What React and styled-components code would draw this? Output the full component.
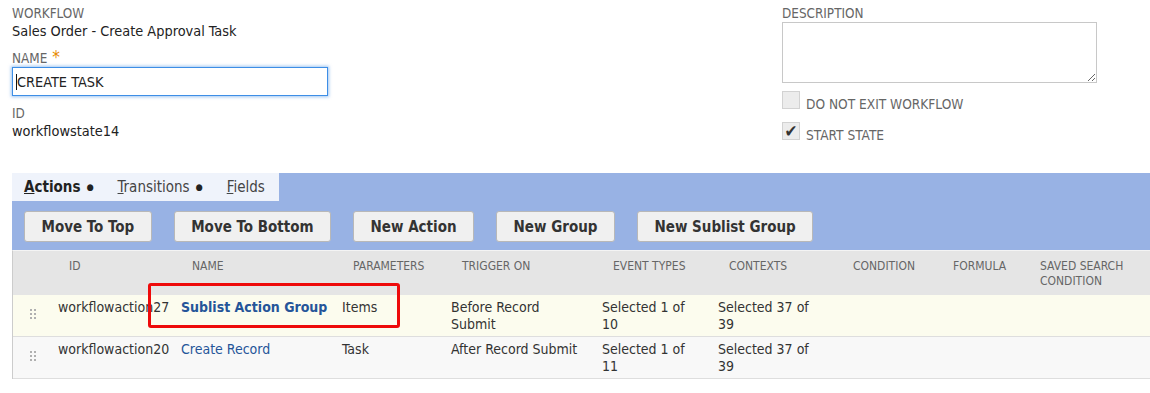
import React from "react";
import styled, { createGlobalStyle } from "styled-components";

const GlobalStyle = createGlobalStyle`
  body {
    margin: 0;
    background: #ffffff;
    font-family: "DejaVu Sans Condensed", "Liberation Sans", sans-serif;
    color: #333333;
  }
`;

const Page = styled.div`
  width: 1150px;
  height: 393px;
  overflow: hidden;
`;

const Form = styled.div`
  display: flex;
  align-items: flex-start;
  padding: 6px 0 0 12px;
`;

const LeftColumn = styled.div`
  width: 770px;
  display: flex;
  flex-direction: column;
`;

const RightColumn = styled.div`
  display: flex;
  flex-direction: column;
`;

const Label = styled.div`
  font-size: 13.4px;
  line-height: 16px;
  color: #666666;
  text-transform: uppercase;
  margin-top: ${(p) => p.$gap || 0}px;
`;

const Required = styled.span`
  color: #e68a00;
  font-size: 17px;
  margin-left: 5px;
  vertical-align: top;
  line-height: 12px;
`;

const Value = styled.div`
  font-size: 14.4px;
  line-height: 18px;
  color: #222222;
`;

const InputWrap = styled.div`
  position: relative;
  width: 316px;
`;

const NameInput = styled.input`
  box-sizing: border-box;
  width: 316px;
  height: 29px;
  padding: 0 4px;
  border: 1px solid #3d8ee6;
  box-shadow: 0 0 3px 1px rgba(80, 150, 230, 0.55);
  font-family: inherit;
  font-size: 14.4px;
  color: #222222;
  outline: none;
`;

const Caret = styled.span`
  position: absolute;
  left: 4px;
  top: 7px;
  width: 1px;
  height: 16px;
  background: #111111;
`;

const Description = styled.textarea`
  box-sizing: border-box;
  width: 315px;
  height: 61px;
  border: 1px solid #c8c8c8;
  resize: both;
  font-family: inherit;
`;

const CheckRow = styled.label`
  display: flex;
  align-items: flex-start;
  gap: 6px;
  height: 18px;
  margin-top: ${(p) => p.$gap}px;
  font-size: 13.6px;
  line-height: 16px;
  color: #666666;
  span {
    margin-top: 5px;
  }
`;

const Box = styled.div`
  box-sizing: border-box;
  width: 18px;
  height: 18px;
  border: 1px solid #d2d2d2;
  background: #ececec;
  display: flex;
  align-items: center;
  justify-content: center;
  color: #333333;
  font-size: 17px;
  line-height: 1;
`;

const Band = styled.div`
  margin: 33px 0 0 12px;
  background: #98b2e4;
`;

const Tabs = styled.div`
  display: flex;
  align-items: center;
  gap: 24px;
  width: 255px;
  height: 28px;
  padding-left: 12px;
  background: #eff3fb;
  font-size: 15px;
  color: #333333;
`;

const Tab = styled.div`
  font-weight: ${(p) => (p.$active ? 700 : 400)};
  color: ${(p) => (p.$active ? "#222222" : "#444444")};
  u {
    text-decoration-thickness: 1px;
  }
`;

const Dot = styled.span`
  font-size: 9px;
  margin-left: 6px;
  vertical-align: 2px;
  color: #222222;
`;

const Toolbar = styled.div`
  display: flex;
  gap: 22px;
  padding: 10px 12px 8px;
`;

const Button = styled.button`
  box-sizing: border-box;
  height: 31px;
  padding: 0 16.5px;
  border: 1px solid #b8b8b8;
  border-radius: 3px;
  background: #f0f0f0;
  font-family: inherit;
  font-size: 15px;
  font-weight: 700;
  color: #333333;
`;

const TableWrap = styled.div`
  position: relative;
  margin-left: 12px;
  border-left: 1px solid #cccccc;
  border-top: 1px solid #f4f4f4;
`;

const Grid = styled.div`
  display: grid;
  grid-template-columns: 39px 123px 161px 109px 151px 116px 124px 100px 87px 127px;
`;

const HeadCell = styled.div`
  background: #e5e5e5;
  height: 44px;
  padding: 8px 8px 0 17px;
  box-sizing: border-box;
  font-size: 12px;
  line-height: 15px;
  color: #666666;
  text-transform: uppercase;
`;

const Cell = styled.div`
  background: ${(p) => (p.$highlight ? "#fcfcee" : "#f8f8f8")};
  border-bottom: 1px solid #dedede;
  height: 42px;
  box-sizing: border-box;
  padding: 4px 12px 0 6px;
  font-size: 14px;
  line-height: 17px;
  color: #333333;
`;

const HandleCell = styled(Cell)`
  padding: 12px 0 0 17px;
`;

const NameLink = styled.a`
  color: #255599;
  font-weight: ${(p) => (p.$bold ? 700 : 400)};
  text-decoration: none;
  white-space: nowrap;
`;

const Annotation = styled.div`
  position: absolute;
  left: 135px;
  top: 32px;
  width: 252px;
  height: 45px;
  box-sizing: border-box;
  border: 3px solid #ee0a0a;
  border-radius: 3px;
`;

const Handle = () => (
  <svg width="7" height="11" viewBox="0 0 7 11">
    {[0, 4, 8].map((y) =>
      [0, 4].map((x) => (
        <rect key={`${x}-${y}`} x={x} y={y} width="2" height="2" fill="#b0b0b0" />
      ))
    )}
  </svg>
);

const headers = [
  "",
  "ID",
  "Name",
  "Parameters",
  "Trigger On",
  "Event Types",
  "Contexts",
  "Condition",
  "Formula",
  "Saved Search Condition",
];

const rows = [
  {
    id: "workflowaction27",
    name: "Sublist Action Group",
    bold: true,
    params: "Items",
    trigger: "Before Record Submit",
    events: "Selected 1 of 10",
    contexts: "Selected 37 of 39",
  },
  {
    id: "workflowaction20",
    name: "Create Record",
    params: "Task",
    trigger: "After Record Submit",
    events: "Selected 1 of 11",
    contexts: "Selected 37 of 39",
  },
];

const buttons = [
  "Move To Top",
  "Move To Bottom",
  "New Action",
  "New Group",
  "New Sublist Group",
];

export default function App() {
  return (
    <Page>
      <GlobalStyle />
      <Form>
        <LeftColumn>
          <Label>Workflow</Label>
          <Value>Sales Order - Create Approval Task</Value>
          <Label $gap={11}>
            Name<Required>*</Required>
          </Label>
          <InputWrap>
            <NameInput defaultValue="CREATE TASK" />
            <Caret />
          </InputWrap>
          <Label $gap={10}>ID</Label>
          <Value>workflowstate14</Value>
        </LeftColumn>
        <RightColumn>
          <Label>Description</Label>
          <Description />
          <CheckRow $gap={8}>
            <Box />
            <span>DO NOT EXIT WORKFLOW</span>
          </CheckRow>
          <CheckRow $gap={13}>
            <Box>✔</Box>
            <span>START STATE</span>
          </CheckRow>
        </RightColumn>
      </Form>

      <Band>
        <Tabs>
          <Tab $active>
            <u>A</u>ctions<Dot>●</Dot>
          </Tab>
          <Tab>
            <u>T</u>ransitions<Dot>●</Dot>
          </Tab>
          <Tab>
            <u>F</u>ields
          </Tab>
        </Tabs>
        <Toolbar>
          {buttons.map((b) => (
            <Button key={b}>{b}</Button>
          ))}
        </Toolbar>
      </Band>

      <TableWrap>
        <Grid>
          {headers.map((h, i) => (
            <HeadCell key={i}>{h}</HeadCell>
          ))}
          {rows.map((r, i) => (
            <React.Fragment key={r.id}>
              <HandleCell $highlight={i === 0}>
                <Handle />
              </HandleCell>
              <Cell $highlight={i === 0}>{r.id}</Cell>
              <Cell $highlight={i === 0}>
                <NameLink href="#" $bold={r.bold}>
                  {r.name}
                </NameLink>
              </Cell>
              <Cell $highlight={i === 0}>{r.params}</Cell>
              <Cell $highlight={i === 0}>{r.trigger}</Cell>
              <Cell $highlight={i === 0}>{r.events}</Cell>
              <Cell $highlight={i === 0}>{r.contexts}</Cell>
              <Cell $highlight={i === 0} />
              <Cell $highlight={i === 0} />
              <Cell $highlight={i === 0} />
            </React.Fragment>
          ))}
        </Grid>
        <Annotation />
      </TableWrap>
    </Page>
  );
}
